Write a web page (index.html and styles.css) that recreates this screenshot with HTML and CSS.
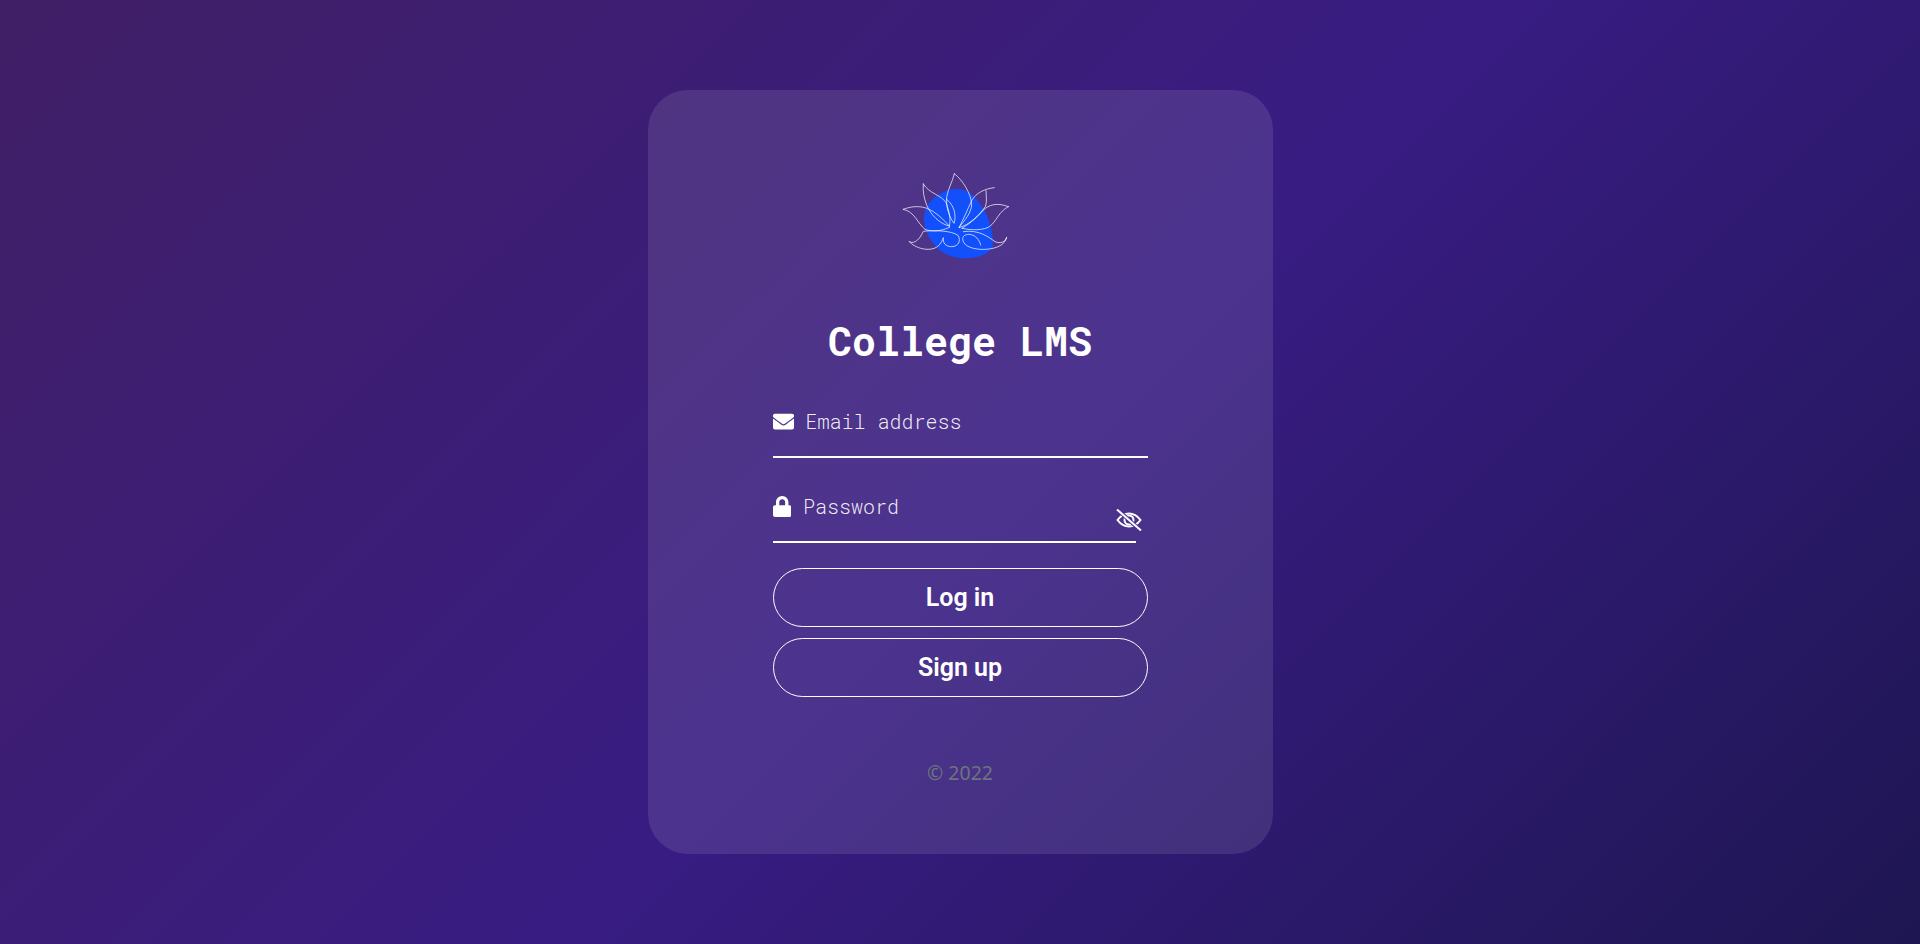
FILE: index.html
```html
<!DOCTYPE html>
<html lang="en">
<head>
<meta charset="utf-8">
<title>College LMS</title>
<link rel="stylesheet" href="styles.css">
</head>
<body>
<main class="card">
  <svg class="logo" viewBox="0 0 480 330" aria-hidden="true">
    <path class="blob" d="M232 87C268 87 296 118 312 150C330 182 342 225 338 262C320 288 285 296 250 295C215 293 180 280 160 250C138 222 128 190 134 160C142 118 190 87 232 87Z"/>
    <g class="petals">
      <path d="M223 41C218 65 204 85 200 112C197 140 208 172 222 190C230 165 222 135 200 118"/>
      <path d="M223 41C250 62 272 100 275 132C275 160 252 182 237 203"/>
      <path d="M130 72C146 100 186 106 198 128C210 160 212 180 208 198C180 192 152 165 140 135C132 115 128 95 130 72Z"/>
      <path d="M343 83C315 86 288 98 275 122C262 150 250 178 237 203C268 194 296 168 316 140C322 125 318 105 318 92"/>
      <path d="M385 140C355 128 325 130 303 158C285 178 262 196 245 205C280 212 312 210 328 200C350 185 355 155 385 140Z"/>
      <path d="M70 148C100 136 132 136 160 155C180 168 198 186 210 201C185 214 155 216 135 208C112 190 105 155 70 148Z"/>
      <path d="M88 245C105 265 150 278 175 258C182 250 188 242 190 233C188 248 196 260 215 260C235 260 244 242 234 226C215 212 165 210 130 214C122 232 105 256 88 245Z"/>
      <path d="M380 232C376 258 340 270 300 268C268 265 248 255 248 235C250 218 292 215 302 255"/>
      <path d="M250 215C295 208 325 230 345 245C362 252 376 246 380 232"/>
    </g>
  </svg>
  <h1 class="title">College LMS</h1>
  <form class="form">
    <label class="field">
      <svg class="icon icon-mail" viewBox="0 0 512 512" aria-hidden="true"><path d="M502.3 190.8c3.9-3.1 9.700-.2 9.700 4.700V400c0 26.500-21.500 48-48 48H48c-26.500 0-48-21.500-48-48V195.600c0-5 5.700-7.800 9.700-4.700 22.400 17.400 52.100 39.500 154.100 113.600 21.100 15.400 56.700 47.800 92.200 47.600 35.700.3 72-32.800 92.300-47.600 102-74.100 131.600-96.300 154-113.700zM256 320c23.200.4 56.600-29.200 73.400-41.400 132.700-96.300 142.800-104.700 173.400-128.700 5.800-4.500 9.200-11.500 9.200-18.900v-19c0-26.500-21.500-48-48-48H48C21.500 64 0 85.500 0 112v19c0 7.400 3.400 14.300 9.200 18.900 30.600 23.900 40.700 32.400 173.400 128.700 16.800 12.200 50.200 41.800 73.400 41.400z"/></svg>
      <span class="placeholder">Email address</span>
    </label>
    <div class="password-row">
      <label class="field field-password">
        <svg class="icon icon-lock" viewBox="0 0 448 512" aria-hidden="true"><path d="M400 224h-24v-72C376 68.200 307.800 0 224 0S72 68.200 72 152v72H48c-26.500 0-48 21.500-48 48v192c0 26.500 21.500 48 48 48h352c26.500 0 48-21.500 48-48V272c0-26.500-21.500-48-48-48zm-104 0H152v-72c0-39.700 32.300-72 72-72s72 32.300 72 72v72z"/></svg>
        <span class="placeholder">Password</span>
      </label>
      <svg class="eye" viewBox="0 0 26 22" aria-hidden="true">
        <path d="M1.500 11C5 6.300 8.800 4.500 13 4.500S21 6.300 24.500 11C21 15.700 17.200 17.500 13 17.500S5 15.700 1.500 11Z"/>
        <path d="M8.500 11A4.500 4.500 0 0 1 13 6.500A4.500 4.500 0 0 1 17.500 11A4.500 4.500 0 0 1 13 15.500A4.500 4.500 0 0 1 8.500 11Z"/>
        <path class="slash-gap" d="M2 1L24 21"/>
        <path d="M1 .5L25 21.500"/>
      </svg>
    </div>
    <button class="btn" type="button">Log in</button>
    <button class="btn" type="button">Sign up</button>
  </form>
  <p class="copy">© 2022</p>
</main>
</body>
</html>
```
FILE: styles.css
```css
* { box-sizing: border-box; }
html, body { height: 100%; }
body {
  margin: 0;
  min-height: 944px;
  display: flex;
  align-items: center;
  justify-content: center;
  background: linear-gradient(135deg, #411f66 0%, #381c82 53%, #1e1652 100%);
  font-family: "Roboto", "Liberation Sans", sans-serif;
  overflow: hidden;
}
.card {
  width: 625px;
  height: 764px;
  padding: 70px 125px 0;
  border-radius: 40px;
  background: rgba(255, 255, 255, 0.1);
  display: flex;
  flex-direction: column;
  align-items: center;
}
.logo { width: 160px; height: 110px; flex: none; }
.blob { fill: #1150fb; }
.petals path {
  fill: none;
  stroke: rgba(255, 255, 255, 0.75);
  stroke-width: 2.8;
  stroke-linecap: round;
  stroke-linejoin: round;
}
.title {
  margin: 47px 0 0;
  font-family: "Roboto Mono", "DejaVu Sans Mono", "Liberation Mono", monospace;
  font-size: 40px;
  line-height: 48px;
  font-weight: 700;
  color: #fff;
}
.form { width: 100%; margin-top: 34px; display: flex; flex-direction: column; }
.field {
  display: flex;
  align-items: center;
  gap: 12px;
  height: 59px;
  padding-bottom: 13px;
  border-bottom: 2px solid #fff;
}
.placeholder {
  font-family: "Roboto Mono", "DejaVu Sans Mono", "Liberation Mono", monospace;
  font-size: 20px;
  font-weight: 300;
  color: rgba(255, 255, 255, 0.92);
}
.icon { fill: #fff; flex: none; height: 21px; }
.icon-mail { width: 21px; }
.icon-lock { width: 18.4px; }
.password-row { position: relative; margin-top: 26px; }
.field-password { width: 363px; }
.eye {
  position: absolute;
  left: 343px;
  top: 25px;
  width: 26px;
  height: 22px;
  fill: none;
  stroke: #fff;
  stroke-width: 2;
}
.eye .slash-gap { stroke: #4d3390; stroke-width: 4; }
.btn {
  height: 59px;
  margin-top: 10.5px;
  border: 1px solid #fff;
  border-radius: 30px;
  background: transparent;
  color: #fff;
  font-family: "Roboto", "Liberation Sans", sans-serif;
  font-size: 25px;
  font-weight: 600;
}
.password-row + .btn { margin-top: 25px; }
.copy {
  margin: 62px 0 0;
  font-family: "Noto Sans", "Open Sans", sans-serif;
  font-size: 19.5px;
  line-height: 28px;
  color: #6c757d;
}
```
